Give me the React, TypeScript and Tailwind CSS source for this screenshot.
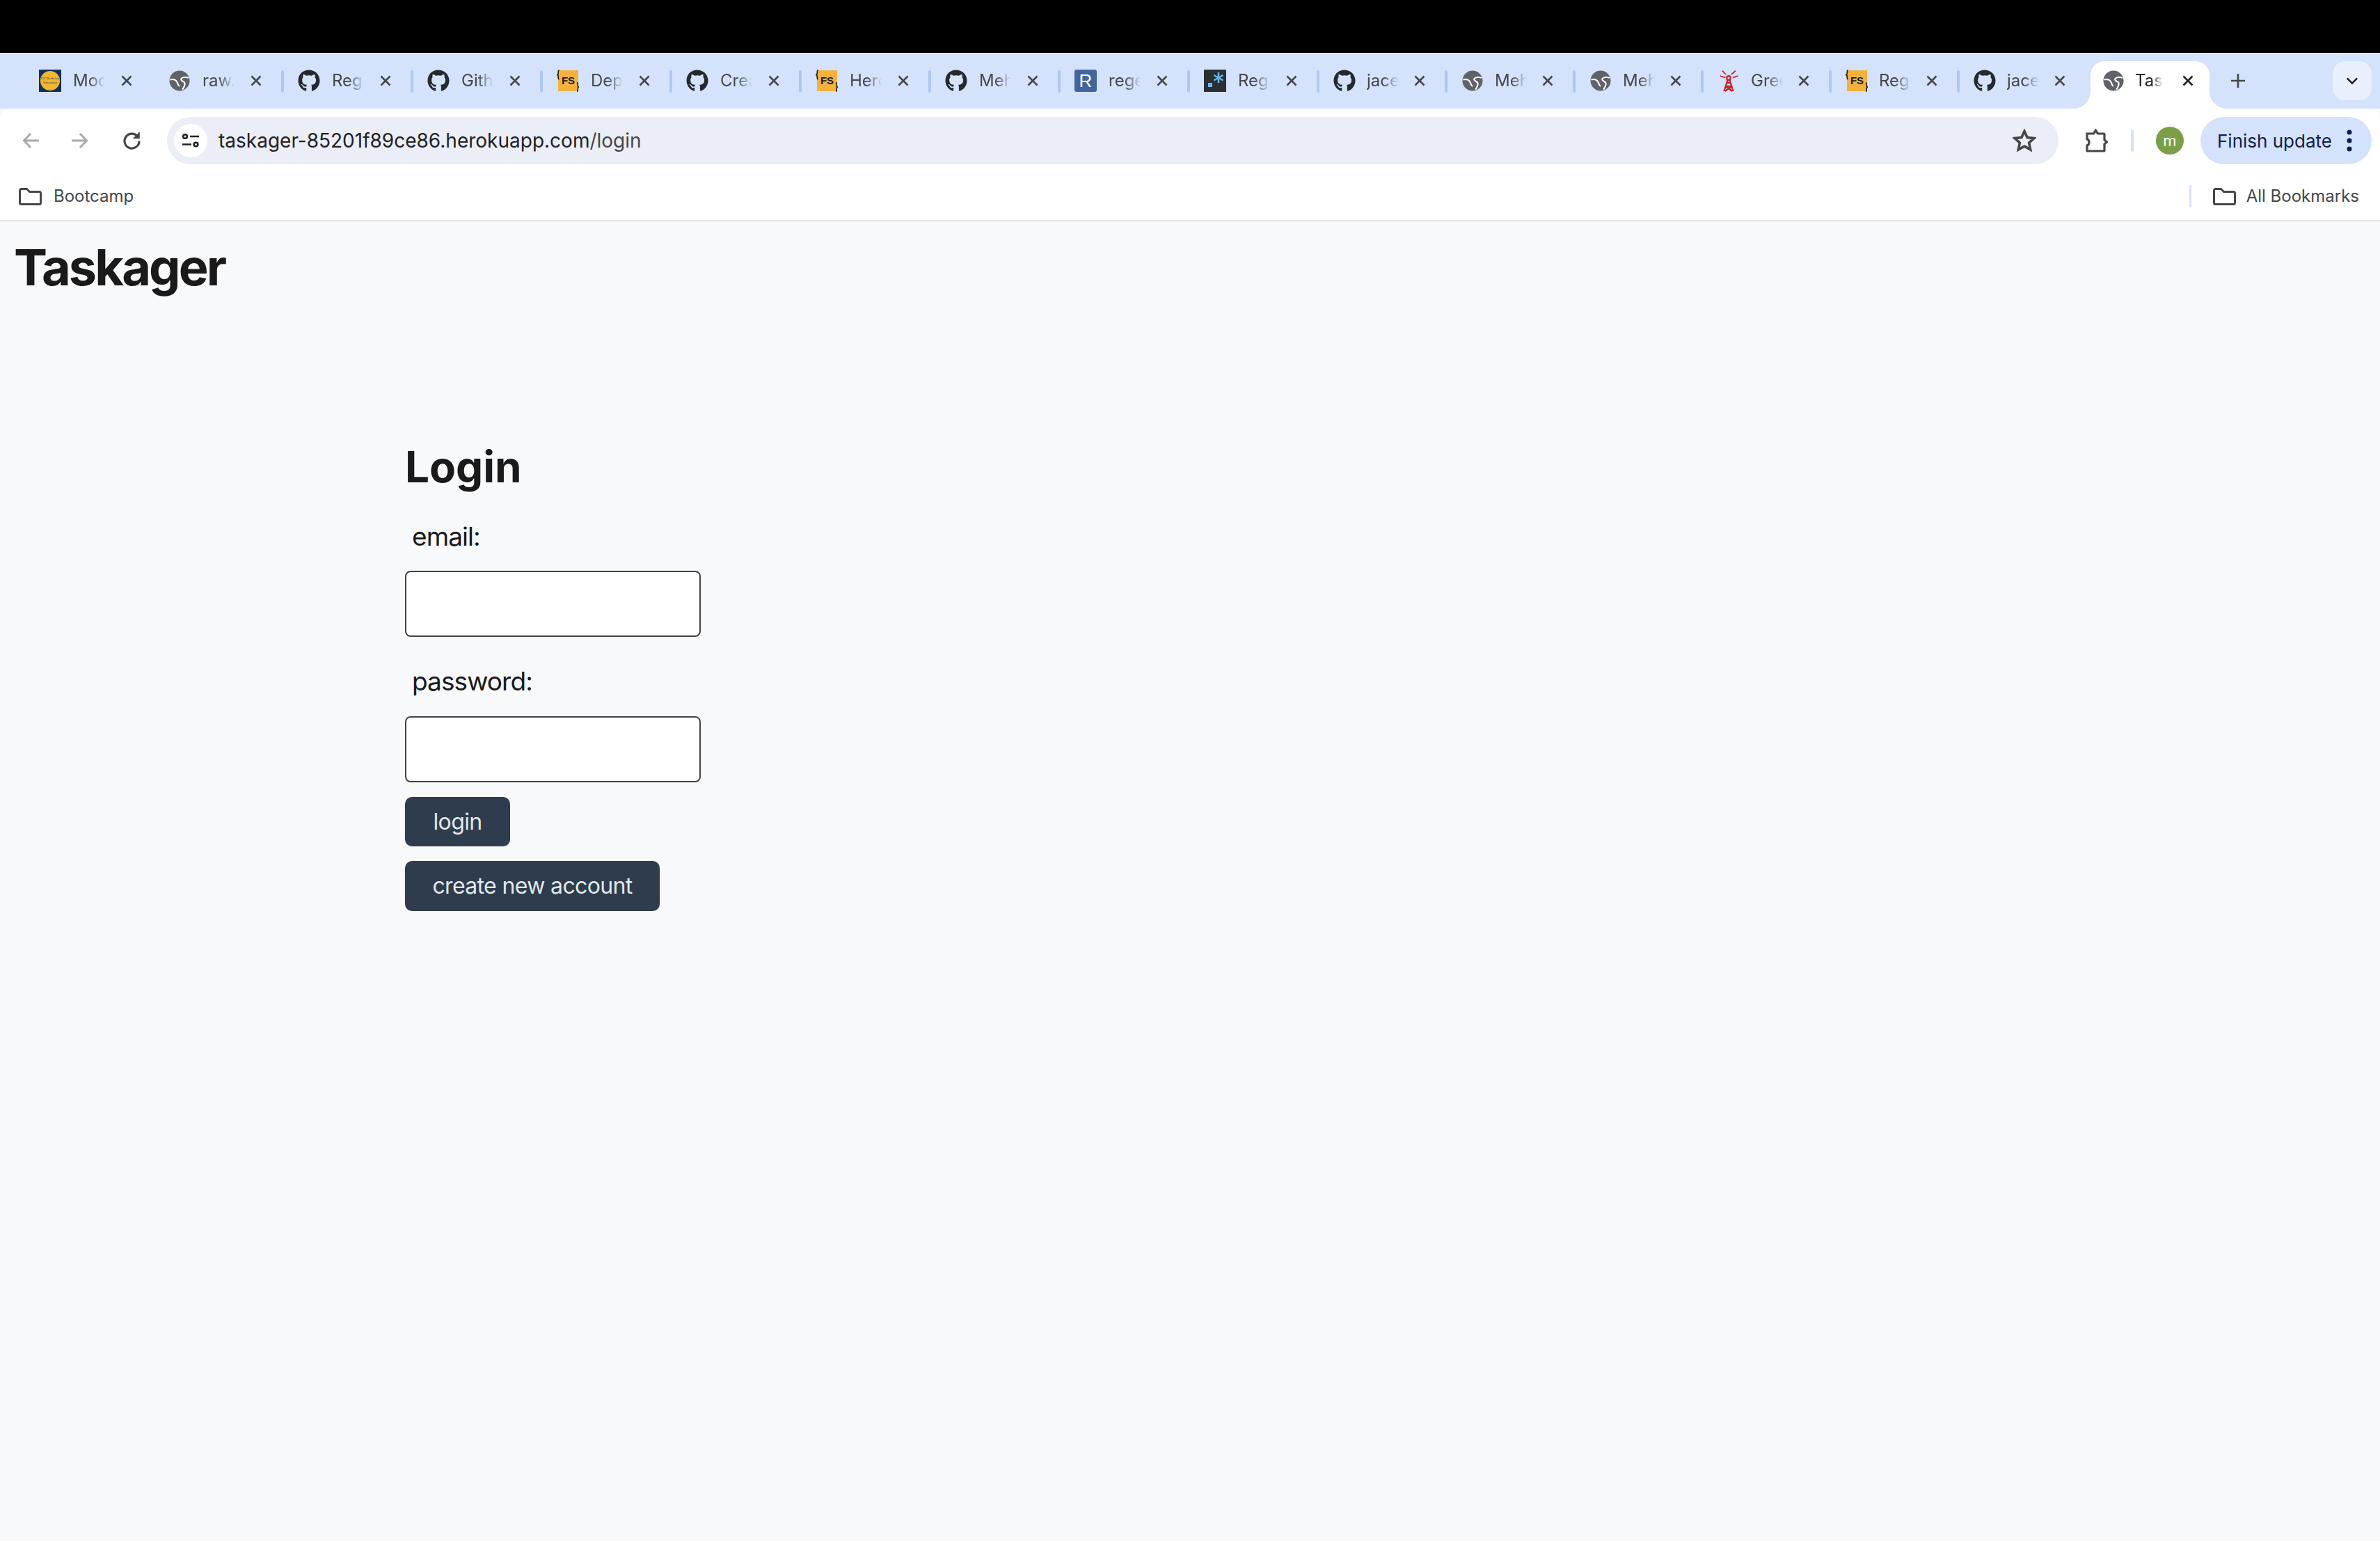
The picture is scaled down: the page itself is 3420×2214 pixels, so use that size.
import React from "react";
import { FaGithub } from "react-icons/fa";

type Kind = "uc" | "globe" | "gh" | "fs" | "r" | "regex" | "tower";
const tabs: { k: Kind; t: string }[] = [
  { k: "uc", t: "Moc" },
  { k: "globe", t: "raw." },
  { k: "gh", t: "Reg" },
  { k: "gh", t: "Gith" },
  { k: "fs", t: "Dep" },
  { k: "gh", t: "Crea" },
  { k: "fs", t: "Herc" },
  { k: "gh", t: "Meh" },
  { k: "r", t: "rege" },
  { k: "regex", t: "Reg" },
  { k: "gh", t: "jace" },
  { k: "globe", t: "Meh" },
  { k: "globe", t: "Meh" },
  { k: "tower", t: "Gree" },
  { k: "fs", t: "Reg" },
  { k: "gh", t: "jace" },
];

function Globe() {
  return (
    <svg viewBox="0 0 32 32" className="w-[30px] h-[30px] shrink-0">
      <circle cx="16" cy="16" r="15.500" fill="#5f6368" />
      <path d="M1.500 14.500C6 13 10 14.500 12 17.500c1.500 2.500 1.500 6 4 7" fill="none" stroke="#fff" strokeWidth="2.200" />
      <path d="M30 11.500c-4-1.500-10-1-11.500 1.500-1 3 3 4 5 5.500 1.500 1.500 0 7-3 11" fill="none" stroke="#fff" strokeWidth="2.200" />
    </svg>
  );
}

function Fs() {
  return (
    <span className="relative w-[32px] h-[32px] shrink-0 block">
      <span className="absolute left-[2px] top-[1px] w-[29px] h-[30px] bg-[#f4b23c] flex items-center justify-center text-[15px] font-bold text-[#1a1a1a] [font-family:'Liberation_Sans',sans-serif]">FS</span>
      <svg viewBox="0 0 32 32" className="absolute inset-0 w-[32px] h-[32px]" fill="none" stroke="#111" strokeWidth="1.500">
        <path d="M3.500 0.500C1.500 1 2.500 5 2 6.500L.5 7.500 2 8.500c.5 2-.5 5 1.500 5.500" />
        <path d="M29 18.500c2 .5 1 4 1.500 5.500l1 1-1 1c-.5 2 .5 5-1.500 5.500" />
      </svg>
    </span>
  );
}

function Icon({ k }: { k: Kind }) {
  if (k === "globe") return <Globe />;
  if (k === "gh") return <FaGithub className="w-[32px] h-[32px] shrink-0 text-[#24292f]" />;
  if (k === "fs") return <Fs />;
  if (k === "uc")
    return (
      <span className="w-[32px] h-[32px] shrink-0 bg-[#12305c] flex items-center justify-center">
        <span className="w-[28px] h-[28px] rounded-full bg-[#f3b62f] flex items-center justify-center text-[5px] leading-[6px] text-center text-[#12305c] [font-family:'Liberation_Serif',serif] whitespace-nowrap">UC Berkeley<br />Extension</span>
      </span>
    );
  if (k === "r")
    return (
      <span className="w-[32px] h-[32px] shrink-0 rounded-[3px] bg-[#41659e] flex items-center justify-center text-white text-[26px] [font-family:'Liberation_Sans',sans-serif]">R</span>
    );
  if (k === "regex")
    return (
      <svg viewBox="0 0 32 32" className="w-[32px] h-[32px] shrink-0">
        <rect width="32" height="32" fill="#2a2f33" />
        <rect x="6" y="19" width="6" height="6" fill="#69b6ef" />
        <path d="M21 4v15M14.500 8l13 7.500M27.500 8l-13 7.500" stroke="#69b6ef" strokeWidth="2.500" />
      </svg>
    );
  return (
    <svg viewBox="0 0 32 32" className="w-[32px] h-[32px] shrink-0" fill="none" stroke="#c0272d" strokeWidth="2.400">
      <path d="M9.500 31l5-16M22.500 31l-5-16M12 24h8M13 19h6M11 31l9-7M21 31l-9-7" />
      <circle cx="16" cy="12" r="2.800" />
      <path d="M7 1.700l5 5.300M26 1.700l-6 5.300M3.700 9l7.600 2.700M29.300 9L22 11.700" strokeWidth="1.800" />
    </svg>
  );
}

function Close({ dark }: { dark?: boolean }) {
  return (
    <svg viewBox="0 0 16 16" className="w-[16px] h-[16px] shrink-0" stroke={dark ? "#202124" : "#45474a"} strokeWidth="2.600">
      <path d="M1.500 1.500l13 13M14.500 1.500l-13 13" />
    </svg>
  );
}

function Folder() {
  return (
    <svg viewBox="0 0 33 25" className="w-[33px] h-[25px] shrink-0" fill="none" stroke="#45474a" strokeWidth="3">
      <path d="M1.500 3.500a2 2 0 0 1 2-2h8l4 4h14a2 2 0 0 1 2 2v14a2 2 0 0 1-2 2h-26a2 2 0 0 1-2-2z" />
    </svg>
  );
}

export default function App() {
  return (
    <div className="w-[3420px] h-[2214px] flex flex-col overflow-hidden bg-[#f8f9fb] [font-family:Inter,'Liberation_Sans',sans-serif]">
      <div className="h-[76px] bg-black shrink-0" />
      {/* tab strip */}
      <div className="h-[80px] shrink-0 bg-[#d5e2fb] flex items-start pl-[34px] pt-[12px]">
        {tabs.map((tab, i) => (
          <div key={i} className={(i < 10 ? "w-[186px]" : "w-[184px]") + " h-[68px] shrink-0 flex items-center pb-[12px] relative"}>
            {i > 1 && <span className="absolute -left-[2px] top-[13px] w-[4px] h-[32px] rounded-full bg-[#aec7f2]" />}
            <span className="w-[22px] shrink-0" />
            <span className="w-[32px] flex justify-center shrink-0"><Icon k={tab.k} /></span>
            <span className={(i < 10 ? "ml-[17px] w-[46px]" : "ml-[16px] w-[46px]") + " overflow-hidden whitespace-nowrap text-[24px] text-[#45474a] [mask-image:linear-gradient(to_right,black_50%,transparent_100%)]"}>{tab.t}</span>
            <span className={i < 10 ? "ml-[23px]" : "ml-[22px]"}><Close /></span>
          </div>
        ))}
        <div className="w-[171px] h-[68px] shrink-0 ml-[6px] bg-white rounded-t-[20px] flex items-center pb-[12px] pl-[18px] relative">
          <span className="absolute -left-[24px] bottom-0 w-[24px] h-[24px] bg-[radial-gradient(circle_at_0_0,transparent_23.500px,white_24px)]" />
          <span className="absolute -right-[24px] bottom-0 w-[24px] h-[24px] bg-[radial-gradient(circle_at_100%_0,transparent_23.500px,white_24px)]" />
          <Globe />
          <span className="ml-[16px] w-[40px] overflow-hidden whitespace-nowrap text-[24px] text-[#202124] [mask-image:linear-gradient(to_right,black_60%,transparent_100%)]">Tasl</span>
          <span className="ml-[28px]"><Close dark /></span>
        </div>
        <svg viewBox="0 0 20 20" className="w-[20px] h-[20px] ml-[31px] mt-[18px] shrink-0" stroke="#45474a" strokeWidth="2.600"><path d="M10 0v20M0 10h20" /></svg>
        <div className="w-[56px] h-[56px] ml-[126px] rounded-[18px] bg-[#e9f0fd] flex items-center justify-center shrink-0">
          <svg viewBox="0 0 20 12" className="w-[18px] h-[12px]" fill="none" stroke="#202124" strokeWidth="2.800"><path d="M2 2l8 8 8-8" /></svg>
        </div>
      </div>
      {/* toolbar */}
      <div className="h-[92px] shrink-0 bg-white rounded-t-[16px] flex items-start pl-[32px] pt-[12px]">
        <div className="h-[68px] flex items-center shrink-0">
          <svg viewBox="0 0 24 24" className="w-[24px] h-[24px] shrink-0" fill="none" stroke="#a9aaac" strokeWidth="3"><path d="M24 12H3M12 2L2.500 12l9.500 10" /></svg>
          <svg viewBox="0 0 24 24" className="w-[24px] h-[24px] shrink-0 ml-[47px]" fill="none" stroke="#a9aaac" strokeWidth="3"><path d="M0 12h21M12 2l9.500 10L12 22" /></svg>
          <svg viewBox="0 0 26 26" className="w-[26px] h-[26px] shrink-0 ml-[49px]" fill="none" stroke="#45474a" strokeWidth="3.200"><path d="M22 7.500a10.500 10.500 0 1 0 2 6" /><path d="M24 1v8.500h-8.500" fill="#45474a" strokeWidth="1.500" /></svg>
        </div>
        <div className="ml-[38px] w-[2718px] h-[68px] rounded-full bg-[#ebeef7] flex items-center pl-[10px] pr-[32px] shrink-0">
          <span className="w-[48px] h-[48px] rounded-full bg-white flex items-center justify-center shrink-0">
            <svg viewBox="0 0 24 20" className="w-[24px] h-[20px]" fill="none" stroke="#202124" strokeWidth="2.600"><circle cx="4" cy="4" r="2.800" /><path d="M11 4h13M0 15.500h13" /><circle cx="19.500" cy="15.500" r="2.800" /></svg>
          </span>
          <span className="ml-[16px] text-[28px] text-[#202124] whitespace-nowrap">taskager-85201f89ce86.herokuapp.com<span className="text-[#45474a]">/login</span></span>
          <svg viewBox="0 0 24 24" className="w-[34px] h-[34px] ml-auto shrink-0" fill="none" stroke="#45474a" strokeWidth="2.600"><path d="M12 2.500l2.900 6.300 6.900.8-5.100 4.700 1.400 6.800L12 17.700l-6.100 3.400 1.400-6.800-5.100-4.700 6.900-.8z" /></svg>
        </div>
        <div className="h-[68px] flex items-center shrink-0">
          <svg viewBox="0 0 33 36" className="w-[33px] h-[36px] ml-[38px] shrink-0" fill="none" stroke="#45474a" strokeWidth="3.200"><path d="M3 8h9.500L15.500 3.500 18.500 8H27a1 1 0 0 1 1 1v8l3.500 3-3.500 3v9a1 1 0 0 1-1 1H4a1 1 0 0 1-1-1v-7c4-1 4-8 0-9z" /></svg>
          <span className="w-[4px] h-[32px] rounded-full bg-[#d5e2fb] ml-[33px] shrink-0" />
          <span className="w-[40px] h-[40px] ml-[32px] rounded-full bg-[#7a9f48] flex items-center justify-center text-white text-[22px] shrink-0">m</span>
          <div className="ml-[24px] w-[246px] h-[68px] rounded-full bg-[#d5e2fb] flex items-center pl-[24px] shrink-0">
            <span className="text-[26px] text-[#0f1f4b] whitespace-nowrap">Finish update</span>
            <svg viewBox="0 0 8 32" className="w-[8px] h-[32px] ml-[21px]" fill="#0f1f4b"><circle cx="4" cy="4" r="3.500" /><circle cx="4" cy="16" r="3.500" /><circle cx="4" cy="28" r="3.500" /></svg>
          </div>
        </div>
      </div>
      {/* bookmarks */}
      <div className="h-[70px] shrink-0 bg-white border-b-2 border-[#e0e3e1] flex items-center pl-[27px] pr-[30px]">
        <Folder />
        <span className="ml-[17px] text-[24px] text-[#45474a]">Bootcamp</span>
        <span className="ml-auto w-[3px] h-[32px] rounded-full bg-[#d5e2fb]" />
        <span className="ml-[31px]"><Folder /></span>
        <span className="ml-[15px] text-[24px] text-[#45474a]">All Bookmarks</span>
      </div>
      {/* page */}
      <div className="flex-1 text-[#1a1a1a]">
        <h1 className="text-[72px] font-bold leading-[88px] pl-[20px] pt-[22px] tracking-[-0.04em]">Taskager</h1>
        <div className="ml-[582px] mt-[205px]">
          <h2 className="text-[62px] font-bold leading-[76px]">Login</h2>
          <label className="block mt-[39px] pl-[10px] text-[37px] leading-[46px] tracking-[-0.025em]">email:</label>
          <input type="text" className="block mt-[26px] w-[425px] h-[95px] bg-white border-2 border-[#444] rounded-[8px]" />
          <label className="block mt-[41px] pl-[10px] text-[37px] leading-[46px] tracking-[-0.025em]">password:</label>
          <input type="password" className="block mt-[27px] w-[425px] h-[95px] bg-white border-2 border-[#444] rounded-[8px]" />
          <button className="block mt-[21px] h-[71px] w-[151px] rounded-[10px] bg-[#2f3c4d] text-[#e0e8ea] text-[32px] tracking-[-0.02em]">login</button>
          <button className="block mt-[21px] h-[72px] w-[366px] rounded-[10px] bg-[#2f3c4d] text-[#e0e8ea] text-[32px] tracking-[-0.02em]">create new account</button>
        </div>
      </div>
    </div>
  );
}
